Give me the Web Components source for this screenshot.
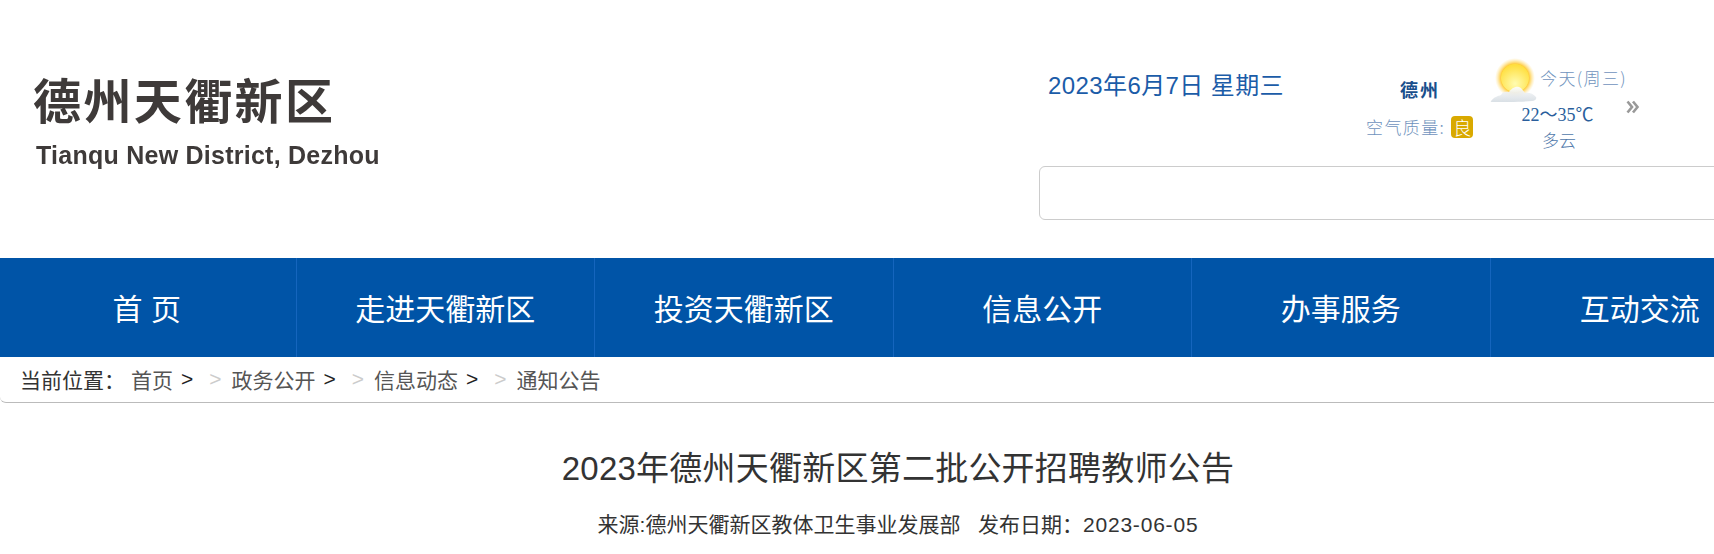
<!DOCTYPE html>
<html lang="zh-CN">
<head>
<meta charset="utf-8">
<title>2023年德州天衢新区第二批公开招聘教师公告</title>
<style>
html,body{
	margin:0;
	height:100%;
	overflow:hidden;
	background:#fff;
	font-family:"Liberation Sans","Noto Sans CJK SC",sans-serif;
}
#page{
	display:block;
	width:1794px;
}
</style>
</head>
<body>
<div id="page">
	<site-header></site-header>
	<main-nav>
		<nav-item>首 页</nav-item>
		<nav-item>走进天衢新区</nav-item>
		<nav-item>投资天衢新区</nav-item>
		<nav-item>信息公开</nav-item>
		<nav-item>办事服务</nav-item>
		<nav-item>互动交流</nav-item>
	</main-nav>
	<bread-crumb></bread-crumb>
	<article-head></article-head>
</div>

<script>
const logoTpl=document.createElement('template');
logoTpl.innerHTML=`
<style>
:host{
	display:block;
	color:#3e3a39;
	font-family:"Liberation Sans","Noto Sans CJK SC",sans-serif;
	font-weight:700;
	filter:blur(.4px);
}
#cn{
	font-size:48px;
	line-height:56px;
	letter-spacing:2.4px;
	white-space:nowrap;
	margin-top:2px;
}
#en{
	font-size:25px;
	line-height:28px;
	letter-spacing:.25px;
	margin-top:10px;
	margin-left:3px;
	white-space:nowrap;
}
</style>
<div id="cn">德州天衢新区</div>
<div id="en">Tianqu New District, Dezhou</div>
`
class SiteLogo extends HTMLElement {
  constructor() {
	super();
	this.attachShadow({mode:"open"})
	this.shadowRoot.appendChild(logoTpl.content.cloneNode(true));
  }
}
customElements.define('site-logo', SiteLogo);

const weatherTpl=document.createElement('template');
weatherTpl.innerHTML=`
<style>
:host{
	display:flex;
	font-family:"Liberation Serif","Noto Sans CJK SC",serif;
	font-size:17px;
	color:#6f93bd;
}
#city{
	width:126px;
	padding-top:24px;
	box-sizing:border-box;
}
#name{
	width:108px;
	text-align:center;
	font-family:"Noto Sans CJK SC",sans-serif;
	font-size:18px;
	line-height:24px;
	font-weight:700;
	letter-spacing:2px;
	color:#1a4f8c;
}
#air{
	display:flex;
	align-items:center;
	margin-top:13px;
	white-space:nowrap;
}
#air span{
	font-family:"Noto Sans CJK SC",sans-serif;
	font-weight:300;
	letter-spacing:1.4px;
}
#air b{
	display:block;
	width:22px;
	height:22px;
	margin-left:6px;
	background:#d9a900;
	border-radius:4px;
	color:#fff;
	text-align:center;
	font:300 18px/22px "Noto Sans CJK SC",sans-serif;
}
#day{
	display:grid;
	grid-template-columns:48px 86px 16px;
	grid-template-rows:47px 25px 26px;
	width:150px;
	padding-top:5px;
}
#sun{
	grid-column:1;
	grid-row:1;
	width:48px;
	height:48px;
	margin-left:-2px;
}
#today{
	grid-column:2;
	grid-row:1;
	padding-top:8px;
	line-height:24px;
	white-space:nowrap;
	font-family:"Noto Sans CJK SC",sans-serif;
	font-weight:300;
	letter-spacing:1.4px;
}
#temp{
	grid-column:1 / 3;
	grid-row:2;
	text-align:center;
	font-size:18px;
	line-height:24px;
	color:#2a5f9c;
	margin:-2px 0 0 -3px;
	white-space:nowrap;
}
#sky{
	grid-column:1 / 3;
	grid-row:3;
	text-align:center;
	line-height:24px;
	font-family:"Noto Sans CJK SC",sans-serif;
	font-weight:300;
	color:#4f78aa;
	margin-top:-2px;
}
#more{
	grid-column:3;
	grid-row:1 / 3;
	align-self:end;
	margin-bottom:16px;
}
#more svg{
	display:block;
	width:14px;
	height:14px;
}
</style>
<div id="city">
	<div id="name">德州</div>
	<div id="air"><span>空气质量:</span><b>良</b></div>
</div>
<div id="day">
	<svg id="sun" viewBox="0 0 48 48">
		<defs>
			<radialGradient id="halo">
				<stop offset="0" stop-color="#ffc21e"/>
				<stop offset=".7" stop-color="#ffc935"/>
				<stop offset="1" stop-color="#ffe28a" stop-opacity="0"/>
			</radialGradient>
			<radialGradient id="core" cx=".5" cy=".7" r=".65">
				<stop offset="0" stop-color="#fffcb0"/>
				<stop offset="1" stop-color="#ffdf40"/>
			</radialGradient>
			<linearGradient id="cloud" x1="0" y1="0" x2="0" y2="1">
				<stop offset="0" stop-color="#fdfdfd"/>
				<stop offset="1" stop-color="#d6dde3"/>
			</linearGradient>
		</defs>
		<circle cx="25" cy="20" r="20" fill="url(#halo)"/>
		<circle cx="25" cy="20" r="14" fill="url(#core)"/>
		<path d="M1 43c3-4 7-5 10-6 1-3 5-4 8-3 2-3 6-6 10-5 3 1 4 4 6 6 3-1 8 0 11 4 1 2-1 4-4 4-10 1-27 1-38 1-2 0-4-0-3-1z" fill="url(#cloud)" opacity=".92"/>
	</svg>
	<div id="today">今天(周三)</div>
	<div id="temp">22～35℃</div>
	<div id="sky">多云</div>
	<div id="more">
		<svg viewBox="0 0 14 14" fill="none" stroke="#999" stroke-width="2.6">
			<path d="M1.500 1.500 6 7 1.500 12.500"/>
			<path d="M7 1.500 11.500 7 7 12.500"/>
		</svg>
	</div>
</div>
`
class WeatherWidget extends HTMLElement {
  constructor() {
	super();
	this.attachShadow({mode:"open"})
	this.shadowRoot.appendChild(weatherTpl.content.cloneNode(true));
  }
}
customElements.define('weather-widget', WeatherWidget);

const headerTpl=document.createElement('template');
headerTpl.innerHTML=`
<style>
:host{
	display:flex;
	height:258px;
	box-sizing:border-box;
}
#left{
	width:1039px;
	padding:73px 0 0 33px;
	box-sizing:border-box;
}
#right{
	flex:1;
}
#top{
	display:flex;
	height:166px;
	box-sizing:border-box;
	padding-top:53px;
}
#date{
	width:327px;
	padding:16px 0 0 9px;
	box-sizing:border-box;
	font-size:24px;
	line-height:34px;
	letter-spacing:.4px;
	color:#1b5ca8;
	font-family:"Liberation Sans","Noto Sans CJK SC",sans-serif;
	white-space:nowrap;
}
#search{
	height:54px;
	box-sizing:border-box;
	border:1px solid #ccc;
	border-radius:6px;
}
</style>
<div id="left"><site-logo></site-logo></div>
<div id="right">
	<div id="top">
		<div id="date">2023年6月7日 星期三</div>
		<weather-widget></weather-widget>
	</div>
	<div id="search"></div>
</div>
`
class SiteHeader extends HTMLElement {
  constructor() {
	super();
	this.attachShadow({mode:"open"})
	this.shadowRoot.appendChild(headerTpl.content.cloneNode(true));
  }
}
customElements.define('site-header', SiteHeader);

const navTpl=document.createElement('template');
navTpl.innerHTML=`
<style>
:host{
	display:flex;
	height:99px;
	background:#0054a7;
	overflow:hidden;
}
#row{
	display:flex;
	margin-left:-2px;
}
</style>
<div id="row"><slot></slot></div>
`
class MainNav extends HTMLElement {
  constructor() {
	super();
	this.attachShadow({mode:"open"})
	this.shadowRoot.appendChild(navTpl.content.cloneNode(true));
  }
}
customElements.define('main-nav', MainNav);

const navItemTpl=document.createElement('template');
navItemTpl.innerHTML=`
<style>
:host{
	display:flex;
	flex:0 0 298.5px;
	align-items:center;
	justify-content:center;
	box-sizing:border-box;
	padding-bottom:2px;
	border-right:1px solid #1565bd;
	color:#fff;
	font-family:"Liberation Sans","Noto Sans CJK SC",sans-serif;
	font-size:30px;
	white-space:pre;
}
:host(:last-child){
	border-right:none;
}
</style>
<slot></slot>
`
class NavItem extends HTMLElement {
  constructor() {
	super();
	this.attachShadow({mode:"open"})
	this.shadowRoot.appendChild(navItemTpl.content.cloneNode(true));
  }
}
customElements.define('nav-item', NavItem);

const crumbTpl=document.createElement('template');
crumbTpl.innerHTML=`
<style>
:host{
	display:flex;
	align-items:center;
	height:46px;
	box-sizing:border-box;
	padding:0 0 2px 20px;
	border-bottom:1px solid #bbb;
	border-radius:0 0 0 6px;
	font-family:"Liberation Sans","Noto Sans CJK SC",sans-serif;
	font-size:21px;
	color:#333;
	white-space:nowrap;
}
a{
	color:#555;
	text-decoration:none;
}
i{
	font-style:normal;
	color:#222;
	margin:0 16px 0 8px;
}
u{
	text-decoration:none;
	color:#ccc;
	margin-right:10px;
}
#label{
	margin-right:6px;
}
</style>
<span id="label">当前位置：</span>
<a>首页</a><i>&gt;</i>
<u>&gt;</u><a>政务公开</a><i>&gt;</i>
<u>&gt;</u><a>信息动态</a><i>&gt;</i>
<u>&gt;</u><a>通知公告</a>
`
class BreadCrumb extends HTMLElement {
  constructor() {
	super();
	this.attachShadow({mode:"open"})
	this.shadowRoot.appendChild(crumbTpl.content.cloneNode(true));
  }
}
customElements.define('bread-crumb', BreadCrumb);

const articleTpl=document.createElement('template');
articleTpl.innerHTML=`
<style>
:host{
	display:block;
	text-align:center;
	font-family:"Liberation Sans","Noto Sans CJK SC",sans-serif;
	color:#333;
	padding:42px 0 0 2px;
}
h1{
	margin:0;
	font-size:33px;
	line-height:48px;
	font-weight:400;
	letter-spacing:.23px;
}
p{
	margin:16px 0 0;
	font-size:21px;
	line-height:32px;
}
p span{
	letter-spacing:.8px;
}
</style>
<h1>2023年德州天衢新区第二批公开招聘教师公告</h1>
<p>来源:德州天衢新区教体卫生事业发展部 &nbsp; 发布日期：<span>2023-06-05</span></p>
`
class ArticleHead extends HTMLElement {
  constructor() {
	super();
	this.attachShadow({mode:"open"})
	this.shadowRoot.appendChild(articleTpl.content.cloneNode(true));
  }
}
customElements.define('article-head', ArticleHead);
</script>
</body>
</html>
